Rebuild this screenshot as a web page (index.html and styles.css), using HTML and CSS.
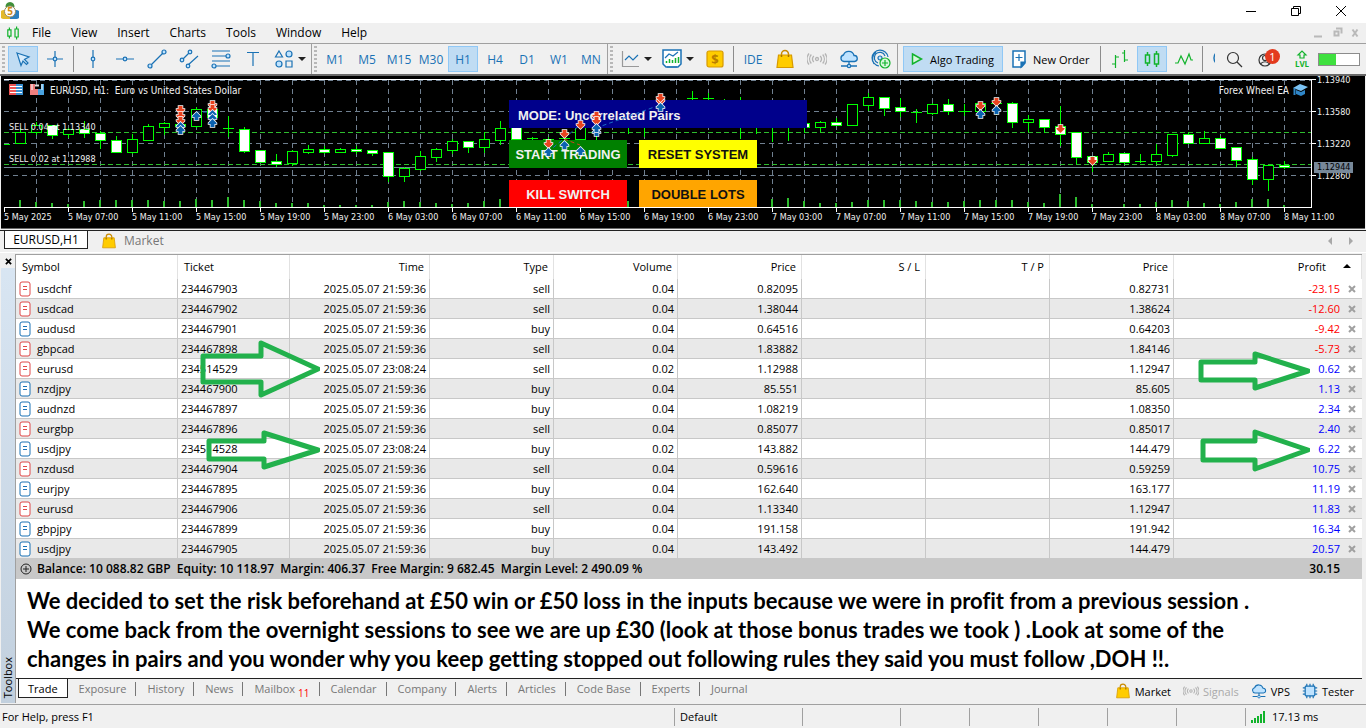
FILE: index.html
```html
<!DOCTYPE html>
<html lang="en">
<head>
    <meta charset="UTF-8">
    <meta name="viewport" content="width=device-width, initial-scale=1.0">
    <title>EURUSD,H1</title>
    <link rel="stylesheet" href="styles.css">
</head>
<body>
    <!-- Shared icons -->
    <svg class="defs" width="0" height="0" aria-hidden="true">
        <symbol id="i-bag" viewBox="0 0 18 20">
            <path d="M5.500 7V5a3.500 3.500 0 0 1 7 0v2" fill="none" stroke="#c98a00" stroke-width="1.500"/>
            <path d="M2.500 6h13l1.500 12.500H1z" fill="#fc0" stroke="#d79a00"/>
            <path d="M5.500 8V6M12.500 8V6" stroke="#a87200" stroke-width="1.500"/>
        </symbol>
        <symbol id="i-signal" viewBox="0 0 20 20">
            <g fill="none" stroke="#b4b4b4" stroke-width="1.300">
                <circle cx="10" cy="10" r="1.500"/>
                <path d="M6.800 7a4.500 4.500 0 0 0 0 6M13.200 7a4.500 4.500 0 0 1 0 6M4.300 5.500a7 7 0 0 0 0 9M15.700 5.500a7 7 0 0 1 0 9M2 4.500a9 9 0 0 0 0 11M18 4.500a9 9 0 0 1 0 11"/>
            </g>
        </symbol>
        <symbol id="i-cloud" viewBox="0 0 20 20">
            <path d="M5 12.500a3.300 3.300 0 0 1-.5-6.500 5.500 5.500 0 0 1 10.500.5 3 3 0 0 1 .5 6z" fill="#bfe3ff" stroke="#1a72b5" stroke-width="1.300"/>
            <path d="M10 12.500v4M2 17h6M12 17h6" stroke="#1a72b5" stroke-width="1.300"/>
            <circle cx="10" cy="17" r="1.700" fill="#bfe3ff" stroke="#1a72b5"/>
        </symbol>
        <symbol id="i-candles" viewBox="0 0 20 20">
            <path d="M5.500 3v3M5.500 14v3M14.500 2v3M14.500 15v3M3.500 6h4v8h-4zM12.500 5h4v10h-4z" fill="none" stroke="#12b32c" stroke-width="1.500"/>
        </symbol>
    </svg>

    <header class="titlebar">
        <svg class="logo" viewBox="0 0 18 18">
            <path d="M9 0a5 5 0 0 1 4.500 5L9 8 4.500 5A5 5 0 0 1 9 0z" fill="#3f8f3a"/>
            <path d="M3 8l6 2v7H2.500A4 4 0 0 1 3 8z" fill="#e3b92c"/>
            <path d="M15 8l-6 2v7h6.500A4 4 0 0 0 15 8z" fill="#2a7fc0"/>
            <circle cx="9" cy="9.500" r="5.500" fill="#fff" stroke="#9a8c60"/>
            <text x="9" y="13" text-anchor="middle">5</text>
        </svg>
        <div class="window-buttons">
            <button aria-label="Minimize"><svg viewBox="0 0 12 12"><path d="M1 6.500h10"/></svg></button>
            <button aria-label="Restore"><svg viewBox="0 0 12 12"><path d="M1.500 3.500h7v7h-7zM3.500 3.500v-2h7v7h-2"/></svg></button>
            <button aria-label="Close"><svg viewBox="0 0 12 12"><path d="M1 1l10 10M11 1L1 11"/></svg></button>
        </div>
    </header>

    <nav class="menubar">
        <svg class="menu-icon"><use href="#i-candles"/></svg>
        <button>File</button>
        <button>View</button>
        <button>Insert</button>
        <button>Charts</button>
        <button>Tools</button>
        <button>Window</button>
        <button>Help</button>
        <svg class="mdi" viewBox="0 0 46 12">
            <path d="M0 9.500h8" stroke-width="2"/>
            <path d="M20.500 4.500h4v4h-4zM22 1.500h5.500v5" stroke-width="2"/>
            <path d="M38.500 2.500l5 7M43.500 2.500l-5 7" stroke-width="2"/>
        </svg>
    </nav>

    <div class="toolbar">
        <div class="group">
            <i class="grip"></i>
            <button class="tool active" aria-label="Cursor"><svg viewBox="0 0 20 20"><path d="M4 4l12 4-4.500 2.500L15 14l-1.500 1.500L10 12l-2 4.500z" fill="#d9edfc"/></svg></button>
            <button class="tool" aria-label="Crosshair"><svg viewBox="0 0 20 20"><path d="M10 2v6M10 12v6M2 10h6M12 10h6"/><circle cx="10" cy="10" r="1.800"/></svg></button>
            <i class="sep"></i>
            <button class="tool" aria-label="Vertical line"><svg viewBox="0 0 20 20"><path d="M10 1v7M10 12v7"/><circle cx="10" cy="10" r="1.800"/></svg></button>
            <button class="tool" aria-label="Horizontal line"><svg viewBox="0 0 20 20"><path d="M1 10h7M12 10h7"/><circle cx="10" cy="10" r="1.800"/></svg></button>
            <button class="tool" aria-label="Trend line"><svg viewBox="0 0 20 20"><path d="M4 16L16 4"/><circle cx="3" cy="17" r="2"/><circle cx="17" cy="3" r="2"/></svg></button>
            <button class="tool" aria-label="Channel"><svg viewBox="0 0 20 20"><path d="M3 11l8-8M9 16l10-9"/><circle cx="3" cy="11" r="1.800"/><circle cx="11" cy="3" r="1.800"/><circle cx="9" cy="17" r="1.800"/></svg></button>
            <button class="tool" aria-label="Fibonacci"><svg viewBox="0 0 20 20"><path d="M1 2h18M1 7h14M1 12h18M5 17h14"/><circle cx="17" cy="7" r="2"/><circle cx="3" cy="17" r="2"/></svg></button>
            <button class="tool" aria-label="Text"><svg viewBox="0 0 20 20"><path d="M4 3.500h12M10 3.500V17"/></svg></button>
            <button class="tool drop" aria-label="Shapes"><svg viewBox="0 0 20 20"><path d="M5 2l3.500 6h-7zM12 12h6v6h-6z"/><circle cx="15" cy="5" r="3"/><circle cx="5" cy="15" r="3"/></svg><b class="caret"></b></button>
        </div>
        <div class="group">
            <i class="grip"></i>
            <button class="tool">M1</button>
            <button class="tool">M5</button>
            <button class="tool">M15</button>
            <button class="tool">M30</button>
            <button class="tool active">H1</button>
            <button class="tool">H4</button>
            <button class="tool">D1</button>
            <button class="tool">W1</button>
            <button class="tool">MN</button>
        </div>
        <div class="group">
            <i class="grip"></i>
            <button class="tool drop" aria-label="Chart type"><svg viewBox="0 0 20 20"><path d="M2.500 2v15.500H19" stroke="#999"/><path d="M5 11l4-4 4 4 5-5"/></svg><b class="caret"></b></button>
            <button class="tool drop" aria-label="Indicators"><svg viewBox="0 0 20 20"><path d="M1 1h18v14l-3 3H4l-3-3z" fill="#fff" stroke-width="1.500"/><path d="M3 9l4-4 4 2 5-4M5 18h10" fill="none"/><path d="M4.500 14v-2M7.500 14v-4M10.500 14v-3M13.500 14V9M16.500 14V8" stroke="#12b32c" stroke-width="1.500"/></svg><b class="caret"></b></button>
            <button class="tool" aria-label="Accounts"><svg viewBox="0 0 20 20"><rect x="2" y="2" width="16" height="16" rx="2" fill="#fc0" stroke="#d79a00"/><text class="dollar" x="10" y="15" text-anchor="middle">$</text></svg></button>
            <i class="sep"></i>
            <button class="tool">IDE</button>
            <button class="tool" aria-label="Market"><svg><use href="#i-bag"/></svg></button>
            <button class="tool" aria-label="Signals"><svg><use href="#i-signal"/></svg></button>
            <button class="tool" aria-label="VPS"><svg><use href="#i-cloud"/></svg></button>
            <button class="tool" aria-label="Add server"><svg viewBox="0 0 20 20"><path d="M8 17A8 8 0 1 1 17 8M7 14a5.500 5.500 0 1 1 7-7M3 15a9 9 0 0 1 2-12"/><circle cx="9" cy="9" r="2"/><circle class="plus" cx="14" cy="14" r="5"/><path d="M14 11v6M11 14h6" stroke="#12b32c"/></svg></button>
        </div>
        <div class="group">
            <button class="tool wide active"><svg viewBox="0 0 20 20"><path d="M5.500 5l9 5-9 5z" fill="#d8f7dc" stroke="#12b32c" stroke-width="1.500"/></svg>Algo Trading</button>
            <button class="tool wide"><svg viewBox="0 0 20 20"><path d="M3 2h12v12l-3.500 4H3z" fill="#fff" stroke-width="1.500"/><path d="M15 13l-4 5v-5z" fill="#1a72b5"/><path d="M5.500 8.500h7M9 5v7"/></svg>New Order</button>
            <i class="sep"></i>
            <button class="tool green" aria-label="Bars"><svg viewBox="0 0 20 20"><path d="M2 15h3M5.500 6v13M5.500 8H9M12 4h2.500M14.500 1v12M14.500 11H18"/></svg></button>
            <button class="tool green active" aria-label="Candles"><svg><use href="#i-candles"/></svg></button>
            <button class="tool green" aria-label="Line"><svg viewBox="0 0 20 20"><path d="M1 14h3l3-7 4 8 4-10 2 6h2"/></svg></button>
            <i class="sep"></i>
            <button class="tool cut" aria-label="Zoom in"><svg viewBox="0 0 20 20"><circle cx="10" cy="9" r="7" stroke-width="1.500"/></svg></button>
        </div>
        <div class="group right">
            <button class="tool dark" aria-label="Search"><svg viewBox="0 0 20 20"><circle cx="9" cy="9" r="5.500"/><path d="M13 13l5 5"/></svg></button>
            <button class="tool dark" aria-label="Profile"><svg viewBox="0 0 20 20"><circle cx="7" cy="11" r="6"/><circle cx="7" cy="9" r="2.500"/><path d="M2.500 15c2-3 7-3 9 0"/></svg><span class="badge">1</span></button>
            <button class="tool green" aria-label="Level"><svg viewBox="0 0 20 20"><path d="M8 9V6H6l4-4 4 4h-2v3z"/><text class="lvl" x="10" y="18" text-anchor="middle">LVL</text></svg></button>
            <div class="meter"><i></i></div>
        </div>
    </div>

    <main class="chart">
        <div class="plot">
            <svg id="plot" class="plot-svg"></svg>
            <div class="chart-title">
                <svg width="37" height="12" viewBox="0 0 37 12">
                    <path d="M0 0h7v11H0z" fill="#e55"/><path d="M7 0h7v11H7z" fill="#3a8fd0"/>
                    <path d="M1 2.500h12M1 5.500h12M1 8.500h12" stroke="#fff"/>
                    <path d="M21 0h5v5h3v6h-8z" fill="#f08080"/><path d="M35 0h-3v5h-3v6h6z" fill="#4aa3e0"/>
                    <path d="M26 1.500h4" stroke="#ddd" stroke-width="2"/>
                    <path d="M23 0v6M33 0v6" stroke="#fff"/>
                </svg>
                EURUSD, H1:&nbsp; Euro vs United States Dollar
            </div>
            <div class="expert">Forex Wheel EA
                <svg width="15" height="12" viewBox="0 0 15 12"><path d="M0 4l7-4 8 3-7 4z" fill="#7cc4f5"/><path d="M3 6l5 2 4-2v4l-4 2-5-2z" fill="#2f86c8"/><path d="M1.500 4v7" stroke="#2f86c8" stroke-width="2"/></svg>
            </div>
            <span class="order first">SELL 0.04 at 1.13340</span>
            <span class="order second">SELL 0.02 at 1.12988</span>
            <div class="panel">
                <div class="mode">MODE: Uncorrelated Pairs</div>
                <button class="start">START TRADING</button>
                <button class="reset">RESET SYSTEM</button>
                <button class="kill">KILL SWITCH</button>
                <button class="double">DOUBLE LOTS</button>
            </div>
            <svg id="deals" class="plot-svg over"></svg>
        </div>
        <div class="price-axis">
            <span>1.13940</span>
            <span>1.13580</span>
            <span>1.13220</span>
            <span>1.12860</span>
            <span class="current">1.12944</span>
        </div>
        <div class="time-axis" id="times"></div>
    </main>

    <div class="chart-tabs">
        <button class="current-tab">EURUSD,H1</button>
        <button class="market-tab"><svg><use href="#i-bag"/></svg>Market</button>
        <svg class="scroll" viewBox="0 0 26 8"><path d="M4 0v8L0 4zM21 0v8l4-4z" fill="#a8a8a8"/></svg>
    </div>

    <section class="toolbox">
        <aside class="strip">
            <button aria-label="Close"><svg viewBox="0 0 8 8"><path d="M1 1l6 6M7 1L1 7" stroke="#000" stroke-width="2"/></svg></button>
            <span>Toolbox</span>
        </aside>
        <div class="toolbox-body">
            <div class="sheet">
                <table>
                    <colgroup>
                        <col class="c-symbol"><col class="c-ticket"><col class="c-time">
                        <col class="c-num"><col class="c-num"><col class="c-num"><col class="c-num"><col class="c-num"><col class="c-num">
                        <col>
                    </colgroup>
                    <thead>
                        <tr>
                            <th>Symbol</th><th>Ticket</th><th>Time</th><th>Type</th><th>Volume</th>
                            <th>Price</th><th>S / L</th><th>T / P</th><th>Price</th>
                            <th>Profit<b class="sort"></b></th>
                        </tr>
                    </thead>
                    <tbody id="trades"></tbody>
                    <tfoot>
                        <tr>
                            <td colspan="9"><svg viewBox="0 0 12 12"><circle cx="6" cy="6" r="5"/><path d="M6 3v6M3 6h6"/></svg>Balance: 10 088.82 GBP&nbsp; Equity: 10 118.97&nbsp; Margin: 406.37&nbsp; Free Margin: 9 682.45&nbsp; Margin Level: 2 490.09 %</td>
                            <td>30.15</td>
                        </tr>
                    </tfoot>
                </table>
                <svg class="arrows left" viewBox="0 0 126 140" width="126" height="140">
                    <path d="M9 21h58V8l57 26-57 26V47H9z"/>
                    <path d="M15 106h55v-8l54 17-54 17v-8H15z"/>
                </svg>
                <svg class="arrows right" viewBox="0 0 126 140" width="126" height="140">
                    <path d="M17 27h54v-8l53 17-53 17v-8H17z"/>
                    <path d="M19 106h52V97l53 18-53 19v-9H19z"/>
                </svg>
            </div>
            <p class="note">We decided to set the risk beforehand at £50 win or £50 loss in the inputs because we were in profit from a previous session .<br>
                We come back from the overnight sessions to see we are up £30 (look at those bonus trades we took ) .Look at some of the<br>
                changes in pairs and you wonder why you keep getting stopped out following rules they said you must follow ,DOH !!.</p>
            <nav class="tabs">
                <button class="selected">Trade</button>
                <button>Exposure</button>
                <button>History</button>
                <button>News</button>
                <button>Mailbox<sub>11</sub></button>
                <button>Calendar</button>
                <button>Company</button>
                <button>Alerts</button>
                <button>Articles</button>
                <button>Code Base</button>
                <button>Experts</button>
                <button>Journal</button>
                <div class="services">
                    <a href="#market"><svg><use href="#i-bag"/></svg>Market</a>
                    <a href="#signals" class="off"><svg><use href="#i-signal"/></svg>Signals</a>
                    <a href="#vps"><svg><use href="#i-cloud"/></svg>VPS</a>
                    <a href="#tester"><svg viewBox="0 0 20 20"><path d="M6 1v18M10 1v18M14 1v18M1 6h18M1 10h18M1 14h18" stroke="#1a72b5" stroke-width="1.500"/><rect x="4" y="4" width="12" height="12" rx="1" fill="#bfe3ff" stroke="#1a72b5" stroke-width="1.500"/></svg>Tester</a>
                </div>
            </nav>
        </div>
    </section>

    <footer class="status">
        <span class="help">For Help, press F1</span>
        <span class="s-profile">Default</span>
        <span class="s-date"></span>
        <span class="s-price"></span>
        <span class="s-price"></span>
        <span class="s-price"></span>
        <span class="s-price"></span>
        <span class="s-price"></span>
        <span class="ping"><svg width="15" height="12" viewBox="0 0 15 12"><path d="M1 12V9M4 12V7M7 12V5M10 12V3M13 12V0" stroke="#12b32c" stroke-width="2"/></svg>17.13 ms</span>
    </footer>

    <script src="script.js"></script>
</body>
</html>
```
FILE: styles.css
```css
* {
    box-sizing: border-box;
}

body {
    margin: 0;
    min-height: 100vh;
    display: flex;
    flex-direction: column;
    background: #f0f0f0;
    color: #000;
    font-family: "Open Sans", "Noto Sans", sans-serif;
    font-size: 12px;
    overflow-x: hidden;
}

button {
    margin: 0;
    padding: 0;
    border: 0;
    background: none;
    color: inherit;
    font: inherit;
}

.defs {
    position: absolute;
}

/* Title bar */
.titlebar {
    display: flex;
    align-items: center;
    justify-content: space-between;
    height: 23px;
    padding: 0 19px 2px 1px;
    background: #fff;
}

.logo {
    width: 18px;
    height: 18px;
}

.logo text {
    font: bold 10px "Open Sans", sans-serif;
    fill: #d08a10;
}

.window-buttons {
    display: flex;
    gap: 33px;
}

.window-buttons svg {
    display: block;
    width: 12px;
    height: 12px;
    fill: none;
    stroke: #000;
}

/* Menu */
.menubar {
    display: flex;
    align-items: center;
    gap: 20px;
    height: 21px;
    padding: 0 6px 1px 5px;
    border-bottom: 1px solid #a0a0a0;
}

.menu-icon {
    width: 16px;
    height: 16px;
    margin-right: -9px;
}

.mdi {
    width: 46px;
    height: 12px;
    margin-left: auto;
    fill: none;
    stroke: #b9b9b9;
}

/* Toolbar */
.toolbar {
    display: flex;
    height: 32px;
    border-bottom: 2px solid #696969;
}

.group {
    flex: none;
    display: flex;
    align-items: center;
    border-right: 1px solid #a0a0a0;
}

.group:nth-child(4) {
    border: 0;
    padding-left: 3px;
}

.group.right {
    margin-left: auto;
    padding-right: 6px;
    border: 0;
}

.grip {
    width: 3px;
    height: 26px;
    margin: 0 2px;
    background: repeating-linear-gradient(#b8b8b8 0 2px, transparent 2px 4px);
}

.sep {
    width: 1px;
    height: 26px;
    margin: 0 3px 0 2px;
    background: #8c8c8c;
}

.tool {
    position: relative;
    display: flex;
    align-items: center;
    justify-content: center;
    width: 30px;
    height: 26px;
    margin: 0 1px;
    border: 1px solid transparent;
    color: #1a72b5;
    white-space: nowrap;
}

.tool.active {
    background: #c0dcf3;
    border-color: #90c8f6;
}

.tool svg {
    flex: none;
    width: 20px;
    height: 20px;
    fill: none;
    stroke: #1a72b5;
    stroke-width: 1.2;
}

.tool circle {
    fill: #bfe3ff;
}

.tool .plus {
    fill: #d8f7dc;
    stroke: #12b32c;
}

.tool.green svg {
    stroke: #12b32c;
}

.tool.dark {
    margin-right: 3px;
}

.tool.dark svg {
    stroke: #333;
}

.tool.dark circle,
.tool.cut circle {
    fill: none;
}

.tool.drop {
    width: 40px;
    gap: 4px;
}

.tool.cut {
    justify-content: flex-start;
    width: 9px;
    padding-left: 3px;
    overflow: hidden;
}

.tool.wide {
    width: auto;
    margin: 0 2px;
    padding: 0 6px 0 2px;
    gap: 3px;
    color: #000;
    font-size: 11px;
}

.tool.wide.active {
    padding: 0 8px 0 3px;
}

.caret {
    border: 4px solid transparent;
    border-top-color: #222;
    border-bottom: 0;
}

.dollar {
    font: bold 13px "Open Sans", sans-serif;
    fill: #b87d00;
    stroke: none;
}

.lvl {
    font: bold 8px "Open Sans", sans-serif;
    fill: #12b32c;
    stroke: none;
}

.badge {
    position: absolute;
    top: 2px;
    right: 2px;
    width: 15px;
    height: 15px;
    border-radius: 50%;
    background: #e33a1e;
    color: #fff;
    font-size: 11px;
    line-height: 15px;
}

.meter {
    width: 42px;
    height: 13px;
    border: 1px solid #8c8c8c;
    background: #fff;
}

.meter i {
    display: block;
    width: 17px;
    height: 100%;
    background: #3fe03f;
}

/* Chart */
.chart {
    display: grid;
    grid-template-columns: 1fr 53px;
    grid-template-rows: 129px 20px;
    margin: 0 1px 0 1px;
    padding: 3px 0 0 3px;
    background: #000;
    color: #f0f0f0;
    border-bottom: 1px solid #696969;
    font-family: "DejaVu Sans Condensed", "DejaVu Sans", sans-serif;
    font-size: 9px;
}

.plot {
    position: relative;
    overflow: hidden;
    border: 1px solid #fff;
    border-width: 1px 1px 1px 0;
}

.plot-svg {
    display: block;
    position: absolute;
    top: 0;
    left: 0;
    width: 100%;
    height: 127px;
}

.plot-svg.over {
    pointer-events: none;
}

.chart-title,
.expert {
    position: absolute;
    top: 3px;
    display: flex;
    align-items: center;
    height: 14px;
    gap: 4px;
    font-size: 10px;
    white-space: nowrap;
}

.chart-title {
    left: 5px;
}

.expert {
    right: 3px;
}

.order {
    position: absolute;
    left: 5px;
    line-height: 12px;
}

.order.first {
    top: 41px;
}

.order.second {
    top: 73px;
}

.panel {
    position: absolute;
    top: 20px;
    left: 505px;
    display: grid;
    grid-template-columns: 118px 118px 38px;
    grid-template-rows: 28px 28px 28px;
    gap: 12px;
    color: #111;
    font: bold 13px "Liberation Sans", Arial, sans-serif;
}

.mode {
    grid-column: 1 / 4;
    padding: 0 9px;
    background: #00008b;
    color: #f0f0f0;
    line-height: 31px;
}

.start {
    grid-column: 1;
    background: #008000;
    color: #f0f0f0;
}

.reset {
    background: #ff0;
}

.kill {
    grid-column: 1;
    background: #f00;
    color: #f0f0f0;
}

.double {
    background: #ffa500;
}

.price-axis {
    position: relative;
    margin-top: -5px;
}

.price-axis span {
    display: block;
    height: 32px;
    padding-left: 5px;
    line-height: 12px;
    background: linear-gradient(#fff, #fff) 0 5px / 4px 1px no-repeat;
}

.price-axis .current {
    position: absolute;
    top: 88px;
    left: 2px;
    height: 11px;
    padding: 0 3px;
    background: #778899;
    color: #000;
    line-height: 11px;
}

.time-axis {
    grid-column: 1 / 3;
    display: flex;
    overflow: hidden;
}

.time-axis span {
    flex: none;
    width: 64px;
    padding-top: 4px;
    background: linear-gradient(#fff, #fff) 0 0 / 1px 4px no-repeat;
    white-space: nowrap;
}

/* Chart tabs */
.chart-tabs {
    display: flex;
    align-items: flex-start;
    height: 23px;
    margin-top: 1px;
    padding: 0 12px 0 4px;
    border-top: 1px solid #222;
    border-bottom: 1px solid #fff;
}

.current-tab {
    width: 84px;
    height: 18px;
    border: 1px solid #222;
    border-top: 0;
    background: #fff;
    line-height: 16px;
}

.market-tab {
    display: flex;
    align-items: center;
    gap: 7px;
    height: 19px;
    margin-left: 13px;
    color: #777;
}

.market-tab svg,
.services svg {
    width: 16px;
    height: 16px;
}

.scroll {
    width: 26px;
    height: 8px;
    margin: 6px 0 0 auto;
}

/* Toolbox */
.toolbox {
    flex: 1;
    display: flex;
    padding: 1px 4px 1px 1px;
}

.strip {
    display: flex;
    flex-direction: column;
    justify-content: space-between;
    width: 14px;
    background: linear-gradient(#d9e6f3, #c2d0de);
}

.strip button {
    height: 14px;
    background: #f0f0f0;
}

.strip svg {
    display: block;
    width: 7px;
    height: 7px;
    margin: auto;
}

.strip span {
    width: 14px;
    padding-top: 5px;
    line-height: 14px;
    font-size: 11px;
    writing-mode: vertical-rl;
    transform: rotate(180deg);
}

.toolbox-body {
    flex: 1;
    display: flex;
    flex-direction: column;
    border-top: 1px solid #a0a0a0;
    border-left: 1px solid #a0a0a0;
}

.sheet {
    position: relative;
    background: #fff;
}

table {
    width: 100%;
    table-layout: fixed;
    border-collapse: separate;
    border-spacing: 0;
    font-size: 11px;
    line-height: 16px;
}

.c-symbol {
    width: 162px;
}

.c-ticket {
    width: 112px;
}

.c-time {
    width: 140px;
}

.c-num {
    width: 124px;
}

th {
    height: 24px;
    padding: 0 5px 0 6px;
    border-right: 1px solid #e2e2e2;
    font-weight: normal;
    text-align: right;
}

th:nth-child(-n+2) {
    text-align: left;
}

th:last-child {
    padding-right: 10px;
}

.sort {
    display: inline-block;
    margin: 0 0 3px 17px;
    border: 4px solid transparent;
    border-top: 0;
    border-bottom-color: #000;
}

tbody td {
    height: 20px;
    padding: 0 3px;
    border-right: 1px solid #c8c8c8;
    border-bottom: 1px solid #c8c8c8;
    text-align: right;
    white-space: nowrap;
}

tbody td:last-child {
    border-right: 0;
    padding-right: 6px;
}

tbody td:nth-child(-n+2) {
    text-align: left;
}

tbody tr:nth-child(even) {
    background: #e9e9e9;
}

.symbol svg {
    width: 12px;
    height: 16px;
    margin: 0 6px 0 0;
    vertical-align: -4px;
    fill: #fff;
    stroke: #1a72b5;
}

.symbol.sell svg {
    stroke: #e04848;
}

tbody .profit {
    color: #00f;
}

tbody .loss {
    color: #f00;
}

.profit svg {
    width: 8px;
    height: 8px;
    margin-left: 8px;
    stroke: #a0a0a0;
    stroke-width: 2;
}

tfoot td {
    height: 20px;
    padding: 0 4px;
    background: #c8c8c8;
    font-size: 12px;
    font-weight: 600;
}

tfoot td:last-child {
    padding-right: 22px;
    text-align: right;
}

tfoot svg {
    width: 12px;
    height: 12px;
    margin-right: 5px;
    vertical-align: -2px;
    fill: none;
    stroke: #222;
}

.arrows {
    position: absolute;
    top: 80px;
    fill: none;
    stroke: #22b14c;
    stroke-width: 5;
    stroke-linejoin: round;
    pointer-events: none;
}

.arrows.left {
    left: 178px;
}

.arrows.right {
    right: 52px;
}

.note {
    flex: 1;
    margin: 0;
    padding: 7px 11px 5px;
    background: #fff;
    font-family: Lato, Carlito, sans-serif;
    font-size: 22px;
    font-weight: bold;
    font-variant-ligatures: none;
    line-height: 29px;
    white-space: nowrap;
}

/* Bottom tabs */
.tabs {
    display: flex;
    height: 25px;
    padding-left: 2px;
    border-top: 1px solid #222;
    color: #777;
    font-size: 11px;
}

.tabs button {
    display: flex;
    align-items: center;
    height: 19px;
    padding: 0 10px 0 11px;
    background: linear-gradient(#777, #777) 100% 3px / 1px 14px no-repeat;
}

.tabs .selected {
    padding: 0 9px;
    border: 1px solid #222;
    border-top: 0;
    background: #fff;
    color: #000;
}

.tabs button:nth-child(12) {
    background: none;
}

.tabs sub {
    padding: 8px 0 0 3px;
    color: #f00;
    font-size: 10px;
    line-height: 10px;
}

.services {
    display: flex;
    align-items: center;
    gap: 12px;
    margin-left: auto;
    padding-right: 8px;
}

.services a {
    display: flex;
    align-items: center;
    gap: 4px;
    color: #000;
    text-decoration: none;
}

.services .off {
    color: #aaa;
}

/* Status bar */
.status {
    display: flex;
    align-items: center;
    height: 24px;
    border-top: 1px solid #a0a0a0;
    font-size: 11px;
}

.status span {
    height: 18px;
    padding-left: 5px;
    border-left: 1px solid #a0a0a0;
    line-height: 18px;
}

.status .help {
    flex: 1;
    padding-left: 2px;
    border: 0;
}

.s-profile {
    width: 128px;
}

.s-date {
    width: 98px;
}

.s-price {
    width: 69px;
}

.ping {
    display: flex;
    align-items: center;
    gap: 6px;
    width: 121px;
}
```
FILE: script.js
```js
const STEP = 16; // px between two bars

// open/close body and wicks in px from the top of the plot:
// [high, body top, body bottom, low, falling, volume]
const bars = [
    [65, 65, 65, 65, 0, 0], [48, 53, 64, 64, 0, 7], [42, 46, 53, 55, 0, 5], [46, 46, 56, 59, 1, 4],
    [48, 50, 55, 58, 0, 3], [41, 50, 54, 58, 1, 6], [51, 54, 61, 69, 1, 7], [56, 61, 73, 73, 1, 7],
    [54, 60, 73, 74, 0, 7], [44, 47, 61, 61, 0, 7], [42, 44, 48, 55, 0, 6], [40, 45, 47, 50, 1, 6],
    [27, 30, 47, 48, 0, 8], [27, 30, 38, 42, 1, 7], [36, 49, 49, 57, 0, 10], [47, 50, 72, 73, 1, 7],
    [71, 71, 83, 83, 1, 6], [74, 82, 85, 87, 1, 4], [70, 72, 84, 86, 0, 4], [65, 70, 73, 74, 0, 4],
    [66, 70, 73, 74, 1, 2], [68, 70, 73, 73, 0, 2], [66, 70, 72, 74, 1, 2], [70, 71, 74, 76, 1, 2],
    [73, 73, 97, 102, 1, 5], [87, 89, 97, 102, 0, 6], [71, 77, 90, 91, 0, 5], [68, 70, 78, 82, 0, 4],
    [59, 62, 71, 74, 0, 3], [62, 62, 68, 73, 1, 4], [52, 60, 68, 73, 0, 6], [41, 49, 61, 65, 0, 8],
    [45, 46, 60, 60, 1, 5], [57, 59, 59, 60, 0, 4], [57, 60, 60, 62, 0, 4], [50, 59, 59, 62, 0, 5],
    [40, 45, 60, 60, 0, 6], [30, 40, 44, 60, 0, 6], [30, 36, 40, 42, 0, 5], [30, 36, 40, 54, 0, 6],
    [30, 36, 40, 57, 1, 5], [25, 30, 36, 40, 0, 4], [22, 24, 30, 36, 0, 4], [11, 19, 19, 28, 0, 5],
    [13, 19, 19, 28, 0, 5], [19, 22, 28, 36, 0, 4], [17, 24, 32, 59, 1, 6], [26, 32, 40, 54, 1, 5],
    [26, 32, 40, 62, 1, 8], [26, 32, 44, 61, 1, 9], [36, 44, 48, 53, 1, 6], [41, 43, 48, 52, 0, 4],
    [38, 43, 46, 46, 1, 4], [24, 25, 46, 46, 0, 5], [13, 18, 26, 31, 0, 7], [18, 18, 29, 36, 1, 7],
    [18, 28, 32, 37, 1, 7], [29, 33, 33, 43, 0, 6], [23, 25, 34, 35, 0, 5], [19, 25, 32, 35, 1, 5],
    [24, 32, 32, 36, 0, 6], [24, 24, 32, 34, 0, 7], [22, 24, 24, 35, 0, 7], [22, 24, 43, 48, 1, 7],
    [35, 40, 43, 52, 0, 5], [39, 40, 48, 53, 1, 4], [26, 47, 55, 66, 1, 13], [53, 53, 78, 84, 1, 10],
    [76, 77, 83, 92, 1, 3], [72, 75, 82, 82, 0, 0], [74, 74, 83, 84, 1, 3], [74, 82, 82, 83, 0, 3],
    [64, 75, 82, 84, 0, 5], [55, 55, 76, 77, 0, 7], [52, 55, 64, 64, 1, 6], [51, 59, 64, 64, 0, 4],
    [56, 59, 69, 69, 1, 3], [67, 68, 81, 87, 1, 5], [77, 80, 100, 105, 1, 8], [86, 86, 100, 111, 0, 8],
    [81, 86, 88, 89, 1, 2]
];

// [bar, y, side]
const deals = [
    [11, 30, "sell"], [11, 36, "sell"], [11, 41, "sell"], [11, 46, "buy"], [11, 50, "buy"],
    [12, 36, "buy"],
    [13, 25, "sell"], [13, 29, "sell"], [13, 34, "buy"], [13, 38, "buy"], [13, 43, "buy"],
    [34, 64, "sell"], [34, 72, "buy"], [35, 54, "sell"], [35, 65, "buy"],
    [36, 45, "sell"], [36, 71, "buy"],
    [37, 36, "sell"], [37, 41, "sell"], [37, 52, "buy"], [37, 48, "buy"],
    [41, 21, "sell"], [41, 18, "sell"], [41, 27, "buy"],
    [61, 26, "sell"], [61, 34, "buy"], [62, 22, "sell"], [62, 30, "buy"],
    [66, 49, "sell"], [68, 81, "sell"]
];

const times = ["5 May 2025", "5 May 07:00", "5 May 11:00", "5 May 15:00", "5 May 19:00", "5 May 23:00",
    "6 May 03:00", "6 May 07:00", "6 May 11:00", "6 May 15:00", "6 May 19:00", "6 May 23:00",
    "7 May 03:00", "7 May 07:00", "7 May 11:00", "7 May 15:00", "7 May 19:00", "7 May 23:00",
    "8 May 03:00", "8 May 07:00", "8 May 11:00"];

function drawPlot() {
    let out = "";
    for (let x = 32; x <= 1280; x += 32) {
        out += `<path d="M${x + 0.5} 0V127" stroke="#708090" stroke-dasharray="5 4"/>`;
    }
    for (const y of [0, 31, 63, 95]) {
        out += `<path d="M0 ${y + 0.5}H4000" stroke="#708090" stroke-dasharray="5 4"/>`;
    }
    for (const y of [52, 84]) {
        out += `<path d="M0 ${y + 0.5}H4000" stroke="#2ebd2e" stroke-dasharray="5 3"/>`;
    }
    out += `<path d="M0 87.5H4000" stroke="#778899"/>`;

    bars.forEach(([high, top, bottom, low, falling, volume], i) => {
        const x = i * STEP;
        out += `<path d="M${x} 127v${-volume}" stroke="#2ebd2e" stroke-width="2"/>`;
        out += `<path d="M${x + 0.5} ${high}V${low}" stroke="#0f0"/>`;
        if (bottom - top < 2) {
            out += `<path d="M${x - 5} ${top - 0.5}h11" stroke="#0f0"/>`;
        } else {
            out += `<rect x="${x - 4.5}" y="${top - 0.5}" width="10" height="${bottom - top}" fill="${falling ? "#fff" : "#000"}" stroke="#0f0"/>`;
        }
    });
    document.getElementById("plot").innerHTML = out;
}

function drawDeals() {
    let out = `<g fill="none" stroke="#1a6fc4" stroke-dasharray="4 3">
        <path d="M192 32h16M544 72l32-27M592 48l64-23"/>
        <path d="M560 59l16 6" stroke="#d04020"/></g>`;
    for (const [bar, y, side] of deals) {
        const flip = side === "sell" ? -1 : 1;
        const color = side === "sell" ? "#e8431f" : "#0b62b0";
        out += `<path transform="translate(${bar * STEP + 0.5} ${y}) scale(1 ${flip})"
            d="M0 -4L4 0V1H2V4H-2V1H-4V0z" fill="${color}" stroke="#fff" stroke-width="1.5" paint-order="stroke"/>`;
    }
    document.getElementById("deals").innerHTML = out;
}

const trades = [
    ["usdchf", 234467903, "21:59:36", "sell", "0.04", "0.82095", "0.82731", "-23.15"],
    ["usdcad", 234467902, "21:59:36", "sell", "0.04", "1.38044", "1.38624", "-12.60"],
    ["audusd", 234467901, "21:59:36", "buy", "0.04", "0.64516", "0.64203", "-9.42"],
    ["gbpcad", 234467898, "21:59:36", "sell", "0.04", "1.83882", "1.84146", "-5.73"],
    ["eurusd", 234514529, "23:08:24", "sell", "0.02", "1.12988", "1.12947", "0.62"],
    ["nzdjpy", 234467900, "21:59:36", "buy", "0.04", "85.551", "85.605", "1.13"],
    ["audnzd", 234467897, "21:59:36", "buy", "0.04", "1.08219", "1.08350", "2.34"],
    ["eurgbp", 234467896, "21:59:36", "sell", "0.04", "0.85077", "0.85017", "2.40"],
    ["usdjpy", 234514528, "23:08:24", "buy", "0.02", "143.882", "144.479", "6.22"],
    ["nzdusd", 234467904, "21:59:36", "sell", "0.04", "0.59616", "0.59259", "10.75"],
    ["eurjpy", 234467895, "21:59:36", "buy", "0.04", "162.640", "163.177", "11.19"],
    ["eurusd", 234467906, "21:59:36", "sell", "0.04", "1.13340", "1.12947", "11.83"],
    ["gbpjpy", 234467899, "21:59:36", "buy", "0.04", "191.158", "191.942", "16.34"],
    ["usdjpy", 234467905, "21:59:36", "buy", "0.04", "143.492", "144.479", "20.57"]
];

function fillTrades() {
    document.getElementById("trades").innerHTML = trades.map(([symbol, ticket, time, type, volume, open, price, profit]) => `
        <tr>
            <td class="symbol ${type}"><svg viewBox="0 0 12 16"><rect x="1" y="1" width="10" height="14" rx="2"/><path d="M4 5.500h4M4 8.500h4"/></svg>${symbol}</td>
            <td>${ticket}</td>
            <td>2025.05.07 ${time}</td>
            <td>${type}</td>
            <td>${volume}</td>
            <td>${open}</td>
            <td></td>
            <td></td>
            <td>${price}</td>
            <td class="profit ${profit < 0 ? "loss" : ""}">${profit}<svg viewBox="0 0 8 8"><path d="M1 1l6 6M7 1L1 7"/></svg></td>
        </tr>`).join("");
}

document.getElementById("times").innerHTML = times.map(t => `<span>${t}</span>`).join("");
drawPlot();
drawDeals();
fillTrades();
```
